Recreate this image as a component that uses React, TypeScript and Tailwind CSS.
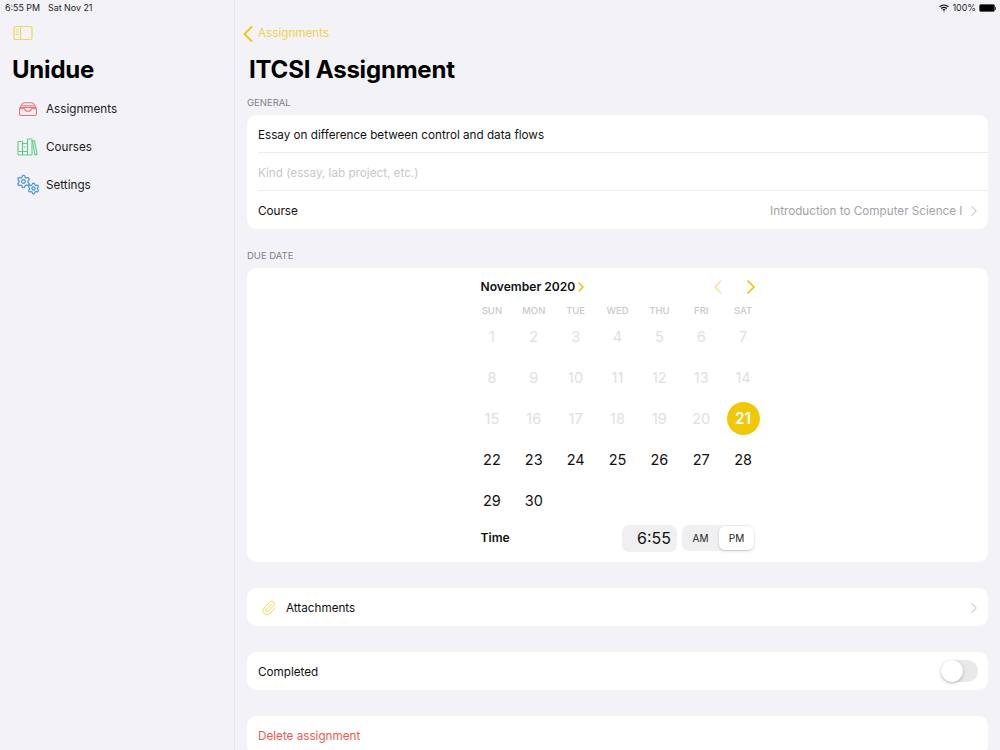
import { ChevronLeft, ChevronRight, Paperclip, Settings } from "lucide-react";
import type { ReactNode } from "react";

const weekDays = ["SUN", "MON", "TUE", "WED", "THU", "FRI", "SAT"];
const days = Array.from({ length: 30 }, (_, i) => i + 1);

function InboxIcon() {
  return (
    <svg width="18" height="14" viewBox="0 0 18 14" fill="none" stroke="#ec6f73" strokeWidth="1.1" strokeLinejoin="round" className="ml-[2px]">
      <rect x="0.6" y="5.5" width="16.8" height="8" rx="1.8" />
      <path d="M0.7 6.6 L3.2 2 Q3.7 0.7 5 0.7 H13 Q14.3 0.7 14.8 2 L17.3 6.6" />
      <path d="M0.7 6.8 H5.6 Q6.1 9.2 9 9.2 Q11.9 9.2 12.4 6.8 H17.3" />
      <path d="M3.4 3.8 H14.6" />
    </svg>
  );
}

function BooksIcon() {
  return (
    <svg width="21" height="18" viewBox="0 0 21 18" fill="none" stroke="#5fcf87" strokeWidth="1.1" strokeLinejoin="round">
      <rect x="1" y="3.5" width="4.5" height="13.5" rx="0.8" />
      <rect x="5.5" y="5.5" width="5" height="11.5" rx="0.8" />
      <rect x="10.5" y="1" width="4.5" height="16" rx="0.8" />
      <path d="M15.6 3 L17.4 2.6 L20.2 16.4 L18 17 Z" />
      <path d="M1 13.5 H5.5 M5.5 13.5 H10.5 M7.2 9 H8.8" />
    </svg>
  );
}

function GearsIcon() {
  return (
    <div className="relative w-[24px] h-[20px] -mt-[1px]">
      <Settings size={15} strokeWidth={1.9} className="absolute -left-[1px] -top-[1px] text-[#3d8fe8]" />
      <Settings size={13} strokeWidth={2.1} className="absolute left-[10px] top-[7px] text-[#3d8fe8]" />
    </div>
  );
}

function SidebarToggleIcon() {
  return (
    <svg width="20" height="16" viewBox="0 0 20 16" fill="none" stroke="#f3d565" strokeWidth="1.2">
      <rect x="1" y="1.5" width="18" height="13" rx="1.6" />
      <path d="M7.5 1.5 V14.5" />
      <path d="M2.6 4.5 H5.6 M2.6 7 H5.6 M2.6 9.5 H5.6" strokeWidth="1" />
    </svg>
  );
}

function StatusBar() {
  return (
    <div className="absolute left-0 right-0 top-0 h-[15px] pt-[1px] flex items-center justify-between pl-[5px] pr-[4px] text-[8.9px] leading-none text-[#1c1c1e]">
      <div className="flex gap-[8px]">
        <span>6:55 PM</span>
        <span>Sat Nov 21</span>
      </div>
      <div className="flex items-center gap-[3px]">
        <svg width="10" height="8" viewBox="0 0 10 8" fill="none" stroke="#000" strokeWidth="1.2">
          <path d="M0.6 2.8 Q5 -0.8 9.4 2.8" />
          <path d="M2.2 4.5 Q5 2.2 7.8 4.5" />
          <path d="M3.7 6 Q5 5 6.3 6" />
          <circle cx="5" cy="7" r="0.6" fill="#000" stroke="none" />
        </svg>
        <span>100%</span>
        <div className="flex items-center">
          <div className="w-[16px] h-[8px] rounded-[2px] border border-[#555] bg-black" />
          <div className="w-[1px] h-[3px] bg-[#555]" />
        </div>
      </div>
    </div>
  );
}

function SidebarItem({ icon, label }: { icon: ReactNode; label: string }) {
  return (
    <div className="flex items-center h-[38px] pl-[17px]">
      <div className="w-[29px] flex items-center">{icon}</div>
      <span className="text-[11.7px] text-[#1c1c1e] mt-[2px]">{label}</span>
    </div>
  );
}

function Sidebar() {
  return (
    <div className="w-[235px] shrink-0 h-full border-r border-[#e4e4e9] pt-[25px]">
      <div className="pl-[13px] h-[16px]">
        <SidebarToggleIcon />
      </div>
      <h1 className="pl-[12px] mt-[12px] h-[34px] leading-[34px] text-[24px] font-bold tracking-[-0.2px] text-black">Unidue</h1>
      <div className="mt-[3px]">
        <SidebarItem icon={<InboxIcon />} label="Assignments" />
        <SidebarItem icon={<BooksIcon />} label="Courses" />
        <SidebarItem icon={<GearsIcon />} label="Settings" />
      </div>
    </div>
  );
}

function Row({ children, divider }: { children: ReactNode; divider?: boolean }) {
  return (
    <div className="h-[38px] pl-[11px]">
      <div className={`h-full flex items-center pt-[4px] pr-[11px] text-[11.7px] text-[#111] ${divider ? "border-b border-[#ececef]" : ""}`}>
        {children}
      </div>
    </div>
  );
}

function SectionLabel({ children }: { children: ReactNode }) {
  return <div className="h-[13px] leading-[13px] text-[9.5px] text-[#7f7f84]">{children}</div>;
}

function Calendar() {
  return (
    <div className="bg-white rounded-[9px] h-[294px] mt-[6px] flex justify-center pt-[10px]">
      <div className="w-[293px]">
        <div className="h-[18px] flex items-center justify-between pl-[9.5px] pr-[1px]">
          <div className="flex items-center">
            <span className="text-[12.1px] font-semibold text-[#111]">November 2020</span>
            <ChevronRight size={16} strokeWidth={2.4} className="text-[#eec400] -ml-[2px]" />
          </div>
          <div className="flex items-center gap-[9.5px]">
            <ChevronLeft size={24} strokeWidth={1.6} className="text-[#f5e6a3]" />
            <ChevronRight size={24} strokeWidth={1.7} className="text-[#eec400]" />
          </div>
        </div>
        <div className="grid grid-cols-7 mt-[8px] h-[14px]">
          {weekDays.map((d) => (
            <div key={d} className="text-center text-[9.5px] leading-[14px] font-medium text-[#c9c9cd]">{d}</div>
          ))}
        </div>
        <div className="grid grid-cols-7 auto-rows-[41px] -mt-[2px]">
          {days.map((d) => (
            <div key={d} className="flex items-center justify-center">
              {d === 21 ? (
                <div className="w-[33px] h-[33px] rounded-full bg-[#f0c808] flex items-center justify-center text-white text-[15.5px] font-semibold">{d}</div>
              ) : (
                <span className={`text-[14.5px] ${d < 21 ? "text-[#e0e0e3]" : "text-[#111]"}`}>{d}</span>
              )}
            </div>
          ))}
        </div>
        <div className="h-[28px] mt-[3px] flex items-center justify-between pl-[9.5px] pr-[10px]">
          <span className="text-[12.1px] font-semibold text-[#111]">Time</span>
          <div className="flex items-center gap-[5px]">
            <div className="w-[55px] h-[27px] bg-[#f0f0f2] rounded-[7px] flex items-center justify-end pr-[6px] text-[16px] text-[#111]">6:55</div>
            <div className="w-[72px] h-[26px] bg-[#f0f0f2] rounded-[7px] flex items-center text-[10px] text-[#222]">
              <div className="w-[37px] text-center">AM</div>
              <div className="w-[35px] h-[24px] bg-white rounded-[6px] shadow-[0_1px_3px_rgba(0,0,0,0.18)] flex items-center justify-center">PM</div>
            </div>
          </div>
        </div>
      </div>
    </div>
  );
}

export default function App() {
  return (
    <div className="relative w-[1000px] h-[750px] overflow-hidden bg-[#f2f2f7] flex font-['Inter','Liberation_Sans',sans-serif]">
      <StatusBar />
      <Sidebar />
      <main className="flex-1 pl-[12px] pr-[12px] pt-[25px]">
        <div className="h-[18px] flex items-center -ml-[13.5px] text-[#f0d250] text-[11.7px]">
          <ChevronLeft size={28} strokeWidth={1.8} className="text-[#efc81c] shrink-0" />
          <span className="-ml-[3.5px]">Assignments</span>
        </div>
        <h2 className="mt-[10px] h-[34px] leading-[34px] pl-[2px] text-[24px] font-bold tracking-[-0.2px] text-black">ITCSI Assignment</h2>
        <div className="mt-[9px]">
          <SectionLabel>GENERAL</SectionLabel>
        </div>
        <div className="bg-white rounded-[9px] mt-[6px] overflow-hidden">
          <Row divider>Essay on difference between control and data flows</Row>
          <Row divider><span className="text-[#c7c7cc]">Kind (essay, lab project, etc.)</span></Row>
          <Row>
            <span className="flex-1">Course</span>
            <span className="text-[#a3a3a8]">Introduction to Computer Science I</span>
            <ChevronRight size={18} strokeWidth={1.4} className="text-[#c2c2c6] ml-[2px] -mr-[5.5px] -mt-[2px]" />
          </Row>
        </div>
        <div className="mt-[20px]">
          <SectionLabel>DUE DATE</SectionLabel>
        </div>
        <Calendar />
        <div className="bg-white rounded-[9px] mt-[26px]">
          <div className="h-[38px] flex items-center pt-[4px] pl-[14px] pr-[5.5px] text-[11.7px] text-[#111]">
            <Paperclip size={16} strokeWidth={1.3} className="text-[#ecd23e] -mt-[2px]" />
            <span className="ml-[9px] flex-1">Attachments</span>
            <ChevronRight size={18} strokeWidth={1.4} className="text-[#c2c2c6] -mt-[2px]" />
          </div>
        </div>
        <div className="bg-white rounded-[9px] mt-[26px]">
          <div className="h-[38px] flex items-center pl-[11px] pr-[10px] text-[11.7px] text-[#111]">
            <span className="flex-1 mt-[4px]">Completed</span>
            <div className="w-[37px] h-[22px] rounded-full bg-[#e9e9ea] relative">
              <div className="absolute left-0 top-0 w-[22px] h-[22px] rounded-full bg-white shadow-[0_1px_3px_rgba(0,0,0,0.3)]" />
            </div>
          </div>
        </div>
        <div className="bg-white rounded-[9px] mt-[26px]">
          <div className="h-[38px] flex items-center pt-[4px] pl-[11px] text-[11.7px] text-[#ef5a50]">Delete assignment</div>
        </div>
      </main>
    </div>
  );
}
